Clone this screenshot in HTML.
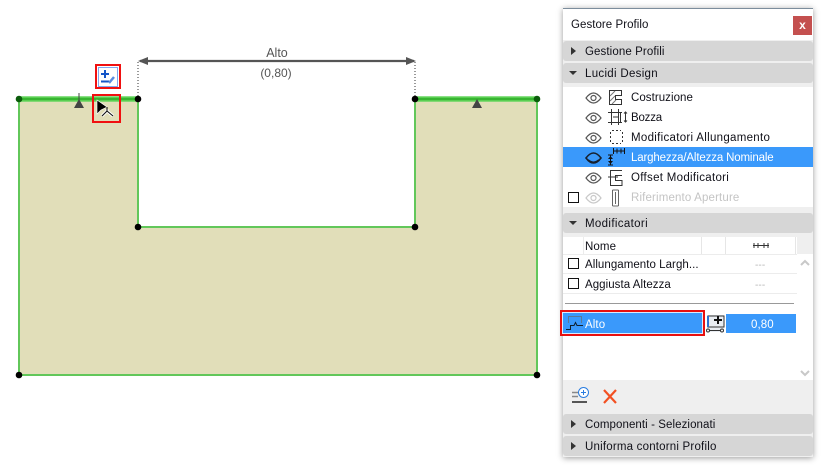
<!DOCTYPE html>
<html><head><meta charset="utf-8">
<style>
html,body{margin:0;padding:0;background:#fff}
body{width:822px;height:465px;position:relative;overflow:hidden;font-family:"Liberation Sans",sans-serif;color:#111}
.a{position:absolute}
.t{position:absolute;font-size:11.5px;letter-spacing:.1px;line-height:14px;margin-top:1px;white-space:nowrap;color:#101018}
.h{position:absolute;left:563px;width:250px;height:20px;background:#d6d6d6;border-radius:3px}
.cb{position:absolute;width:9px;height:9px;border:1px solid #111;background:#fff}
svg{position:absolute;left:0;top:0}
</style></head><body>
<svg width="560" height="465" viewBox="0 0 560 465">
<path d="M19 99H138V227H415V99H537V375H19Z" fill="#e1deb9" stroke="none"/>
<path d="M19 99V375H537V99M138 99V227H415V99" fill="none" stroke="#62c75a" stroke-width="2"/>
<path d="M19 99H138M415 99H537" stroke="#66d65e" stroke-width="5.500"/>
<path d="M19 99H138M415 99H537" stroke="#38b531" stroke-width="2.500"/>
<path d="M138 62V97M415 62V97" stroke="#333" stroke-width="1" stroke-dasharray="1 2"/>
<path d="M140 61H414" stroke="#555" stroke-width="2.200"/>
<path d="M138 61L148 57V65ZM416 61L406 57V65Z" fill="#555"/>
<path d="M74 108L79 99L84 108Z" fill="#444"/><path d="M79 93V100" stroke="#444"/>
<path d="M472 108L477 99L482 108Z" fill="#444"/>
<circle cx="19" cy="99" r="3.300" fill="#0b5c0b"/><circle cx="537" cy="99" r="3.300" fill="#0b5c0b"/>
<circle cx="138" cy="99" r="3.300" fill="#000"/><circle cx="415" cy="99" r="3.300" fill="#000"/>
<circle cx="138" cy="227" r="3.300" fill="#000"/><circle cx="415" cy="227" r="3.300" fill="#000"/>
<circle cx="19" cy="375" r="3.300" fill="#000"/><circle cx="537" cy="375" r="3.300" fill="#000"/>
<rect x="96" y="65" width="24" height="23" fill="#fff" stroke="#f01010" stroke-width="2"/>
<rect x="98.500" y="67.500" width="19" height="19" fill="#fff" stroke="#80a8f0"/>
<path d="M101 74H109M105 70V78" stroke="#1556c8" stroke-width="2"/>
<path d="M101 81.500H109" stroke="#1556c8" stroke-width="2"/>
<path d="M109 83L114 77" stroke="#5a8ce0" stroke-width="2.500"/>
<rect x="93" y="95" width="27" height="27" fill="none" stroke="#f01010" stroke-width="2"/>
<path d="M97 100V114L101 110L107 107Z" fill="#000" stroke="#fff" stroke-width=".6"/>
<path d="M107 109L107 111L102 116M107 111L113 116" stroke="#fff" stroke-width="3" fill="none"/>
<path d="M107 107V111L102 116M107 111L113 116" stroke="#111" stroke-width="1.100" fill="none"/>
<text x="277" y="57" text-anchor="middle" font-family="Liberation Sans" font-size="12.500" fill="#555">Alto</text>
<text x="276" y="77" text-anchor="middle" font-family="Liberation Sans" font-size="12" fill="#555">(0,80)</text>
</svg>

<div class="a" style="left:563px;top:8px;width:250px;height:449px;background:#efefef;box-shadow:0 1px 6px rgba(0,0,0,.4);border-top:1px solid #7c8d9c;box-sizing:border-box"></div>
<div class="a" style="left:563px;top:9px;width:250px;height:31px;background:#fff"></div>
<div class="t" style="left:571px;top:17px;font-size:11.5px;letter-spacing:.05px">Gestore Profilo</div>
<div class="a" style="left:793px;top:16px;width:19px;height:19px;background:#c4504f;color:#fff;font-size:12px;font-weight:bold;text-align:center;line-height:18px">x</div>

<div class="h" style="top:41px"></div>
<div class="h" style="top:63px"></div>
<div class="a" style="left:563px;top:87px;width:250px;height:120px;background:#fff"></div>
<div class="a" style="left:563px;top:147px;width:250px;height:20px;background:#3a99fb"></div>
<div class="h" style="top:213px"></div>
<div class="a" style="left:563px;top:237px;width:234px;height:143px;background:#fff"></div>
<div class="a" style="left:797px;top:254px;width:16px;height:126px;background:#fff"></div>
<div class="h" style="top:414px"></div>
<div class="h" style="top:436px"></div>

<svg width="822" height="465" viewBox="0 0 822 465">
<path d="M571 47V55L576 51ZM571 420V428L576 424ZM571 442V450L576 446Z" fill="#333"/>
<path d="M569 71H577L573 75ZM569 221H577L573 225Z" fill="#333"/>
<g fill="none" stroke="#555" stroke-width="1.200">
<path d="M586 98Q593.500 88 601 98Q593.500 108 586 98Z"/><circle cx="593.500" cy="98" r="2.500"/>
<path d="M586 118Q593.500 108 601 118Q593.500 128 586 118Z"/><circle cx="593.500" cy="118" r="2.500"/>
<path d="M586 138Q593.500 128 601 138Q593.500 148 586 138Z"/><circle cx="593.500" cy="138" r="2.500"/>
<path d="M586 178Q593.500 168 601 178Q593.500 188 586 178Z"/><circle cx="593.500" cy="178" r="2.500"/>
<path d="M586 198Q593.500 188 601 198Q593.500 208 586 198Z" stroke="#c8c8c8"/><circle cx="593.500" cy="198" r="2.500" stroke="#c8c8c8"/>
</g>
<g fill="none" stroke="#333" stroke-width="1">
<path d="M609.500 90.500H621.500V95.500H615.500V99.500H621.500V104.500H609.500Z"/>
<path d="M610 96L615 91M610 101L615 96M612 104L616 100" stroke="#777"/>
<path d="M608 112.500H622M608 122.500H622M611.500 109V125M618.500 109V125M620.500 112.500V122.500M613 117H618" />
<path d="M625.500 112V122M624 113.500L625.500 112L627 113.500M624 120.500L625.500 122L627 120.500" stroke-width="1"/>
<path d="M612 130.500H621M612 143.500H621M610.500 132V142M622.500 132V142" stroke-dasharray="2 2"/>
<path d="M622 170.500H610.500V185.500H622V180.500H615.500V175.500H622M608 177H618"/>
<path d="M612.500 190V206M618.500 190V206M615.500 192V204M612.500 190H618.500M612.500 206H618.500" stroke="#666"/>
</g>
<path d="M586 158Q593.500 148 601 158Q593.500 168 586 158Z" fill="none" stroke="#16202e" stroke-width="1.600"/>
<path d="M588 160Q593.500 165 599 160" fill="none" stroke="#16202e" stroke-width="2"/>
<path d="M613 151H625M613.500 148V154M617 148.500V153.500M621 148.500V153.500M624.500 148V154M608 155H613M610.500 155V165M608 165H613" fill="none" stroke="#111" stroke-width="1"/>
<path d="M608 159L610.500 156L613 159ZM608 161L610.500 164L613 161Z" fill="#111"/>
</svg>

<div class="t" style="left:585px;top:44px;letter-spacing:.1px">Gestione Profili</div>
<div class="t" style="left:585px;top:66px;letter-spacing:.3px">Lucidi Design</div>
<div class="t" style="left:631px;top:90px;letter-spacing:.05px">Costruzione</div>
<div class="t" style="left:631px;top:110px;letter-spacing:-.2px">Bozza</div>
<div class="t" style="left:631px;top:130px;letter-spacing:.3px">Modificatori Allungamento</div>
<div class="t" style="left:631px;top:150px;color:#fff;letter-spacing:-.15px">Larghezza/Altezza Nominale</div>
<div class="t" style="left:631px;top:170px;letter-spacing:.3px">Offset Modificatori</div>
<div class="t" style="left:631px;top:190px;color:#c4c4c4;letter-spacing:.15px">Riferimento Aperture</div>
<div class="cb" style="left:568px;top:192px"></div>
<div class="t" style="left:585px;top:216px;letter-spacing:.35px">Modificatori</div>

<div class="t" style="left:585px;top:239px">Nome</div>
<div class="a" style="left:701px;top:237px;width:1px;height:17px;background:#e6e6e6"></div>
<div class="a" style="left:725px;top:237px;width:1px;height:17px;background:#e6e6e6"></div>
<div class="a" style="left:795px;top:237px;width:1px;height:17px;background:#e6e6e6"></div>
<div class="a" style="left:583px;top:237px;width:1px;height:17px;background:#ececec"></div>
<div class="a" style="left:563px;top:254px;width:234px;height:1px;background:#ececec"></div>
<div class="a" style="left:563px;top:273px;width:234px;height:1px;background:#ececec"></div>
<div class="a" style="left:563px;top:293px;width:234px;height:1px;background:#ececec"></div>
<div class="a" style="left:565px;top:303px;width:229px;height:1px;background:#999"></div>
<div class="cb" style="left:568px;top:258px"></div>
<div class="cb" style="left:568px;top:278px"></div>
<div class="t" style="left:585px;top:257px;letter-spacing:.05px">Allungamento Largh...</div>
<div class="t" style="left:585px;top:277px;letter-spacing:.05px">Aggiusta Altezza</div>
<div class="t" style="left:755px;top:258px;color:#b5b5b5;font-size:10px">---</div>
<div class="t" style="left:755px;top:278px;color:#b5b5b5;font-size:10px">---</div>

<div class="a" style="left:560px;top:310px;border:2px solid #e81010;background:#3a99fb;box-shadow:inset 0 0 0 1px #d8ebff;width:141px;height:22px"></div>
<div class="t" style="left:585px;top:317px;color:#fff">Alto</div>
<div class="a" style="left:726px;top:314px;width:70px;height:19px;background:#3a99fb"></div>
<div class="t" style="left:751px;top:317px;color:#fff">0,80</div>

<svg width="822" height="465" viewBox="0 0 822 465">
<path d="M753 245.500H769M754 243V248M758 243V248M764 243V248M768 243V248" stroke="#333" fill="none"/>
<path d="M568.500 323V316.500H581.500V323" fill="none" stroke="#5a7898"/>
<path d="M566 329.500H570.500V325.500H574L575.500 322.500L577 325.500H583" fill="none" stroke="#10202e" stroke-width="1"/>
<rect x="707" y="315" width="17" height="17" fill="#e9edf2"/>
<path d="M708 316H724V327H708Z" fill="none" stroke="#333"/>
<path d="M708 316V327" stroke="#2a70d0" stroke-width="2"/>
<path d="M714 320H722M718 316V324" stroke="#111" stroke-width="2"/>
<path d="M708 330.500H722" stroke="#333"/><circle cx="708" cy="330.500" r="1.500" fill="#fff" stroke="#333"/><circle cx="722" cy="330.500" r="1.500" fill="#fff" stroke="#333"/>
<path d="M801 265L805 261L809 265M801 371L805 375L809 371" fill="none" stroke="#c8c8c8" stroke-width="2"/>
<path d="M572 392.500H578M572 396.500H578" stroke="#888" stroke-width="1.500"/>
<path d="M572 402H587" stroke="#222" stroke-width="1.500"/>
<circle cx="583.500" cy="392.500" r="5" fill="#fff" stroke="#2a7de0"/>
<path d="M581 392.500H586M583.500 390V395" stroke="#2a7de0"/>
<path d="M604 390L616 403M616 390L604 403" stroke="#f25022" stroke-width="2.200"/>
</svg>

<div class="t" style="left:585px;top:417px;letter-spacing:.08px">Componenti - Selezionati</div>
<div class="t" style="left:585px;top:439px;letter-spacing:.2px">Uniforma contorni Profilo</div>
</body></html>
